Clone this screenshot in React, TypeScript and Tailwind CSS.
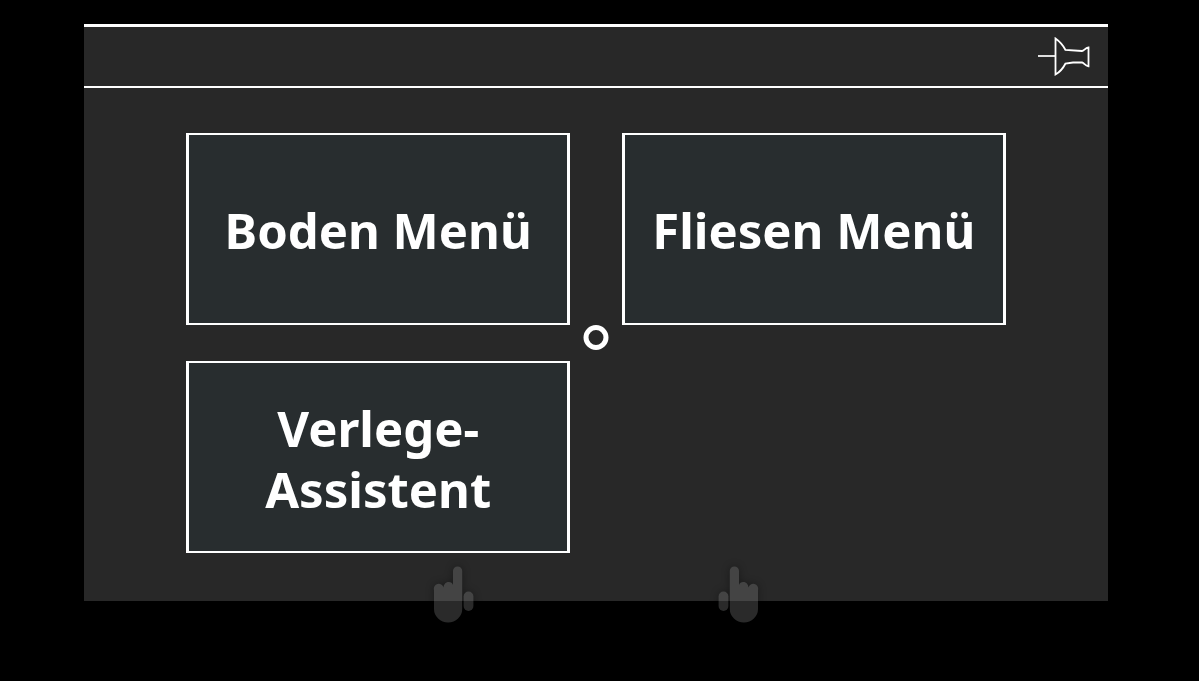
import React from "react";

const menuItems: string[][] = [["Boden Menü"], ["Fliesen Menü"], ["Verlege-", "Assistent"]];

function PinIcon() {
  return (
    <svg width="54" height="40" viewBox="0 0 54 40" fill="none" stroke="white" strokeWidth="1.8" aria-hidden="true">
      <path d="M1 19H18" strokeWidth="2" strokeOpacity="0.85" />
      <path d="M18.500 1.500V37.500C22 35.500 26 31.500 28.500 26.500L36 25.500L45 25.300C47 25.800 48 28.800 51.500 29.300V10.500C48 11 47 14 45 14L28.500 13C26 8 22 4 18.500 1.500Z" />
    </svg>
  );
}

function Hand({ flipped = false }: { flipped?: boolean }) {
  return (
    <svg
      width="40"
      height="57"
      viewBox="0 0 40 57"
      className={flipped ? "-scale-x-100 overflow-visible" : "overflow-visible"}
      aria-hidden="true"
    >
      <g className="opacity-35 drop-shadow-[0_0_4px_black]" fill="#787a7a">
        <path d="M0 43V24A4.500 4.500 0 0 1 9.500 21.500C10 14.500 18 14.500 19 19V5A4.600 4.600 0 0 1 28.200 5V43A14.100 13.500 0 0 1 0 43Z" />
        <rect x="29.600" y="25.500" width="9.800" height="19.500" rx="4.900" />
      </g>
    </svg>
  );
}

export default function App() {
  return (
    <div className="min-h-screen bg-black pt-6 pr-[91px] pl-[84px] font-['Noto_Sans','Open_Sans',sans-serif] text-white">
      <main className="relative bg-[#282828]">
        <header className="flex h-16 items-center justify-end border-t-[3px] border-b-2 border-white pr-[17px]">
          <button type="button" aria-label="Menü anheften">
            <PinIcon />
          </button>
        </header>

        <div className="px-[10%] pt-[45px] pb-12">
          <div className="relative grid grid-cols-2 gap-x-[52px] gap-y-9">
            {menuItems.map((lines) => (
              <button
                key={lines.join("")}
                type="button"
                className="flex aspect-[2/1] items-center justify-center border-x-[3px] border-y-2 border-white bg-[#282d2f] pt-1 text-[49px] leading-[61px] font-bold"
              >
                <span className="whitespace-pre-line">{lines.join("\n")}</span>
              </button>
            ))}
            <span className="pointer-events-none absolute top-[192px] left-1/2 size-[25px] -translate-x-1/2 rounded-full border-[5px] border-white" />
          </div>
        </div>

        <div className="pointer-events-none absolute inset-x-0 -bottom-[22px] flex justify-center gap-[244px]">
          <Hand />
          <Hand flipped />
        </div>
      </main>
    </div>
  );
}
